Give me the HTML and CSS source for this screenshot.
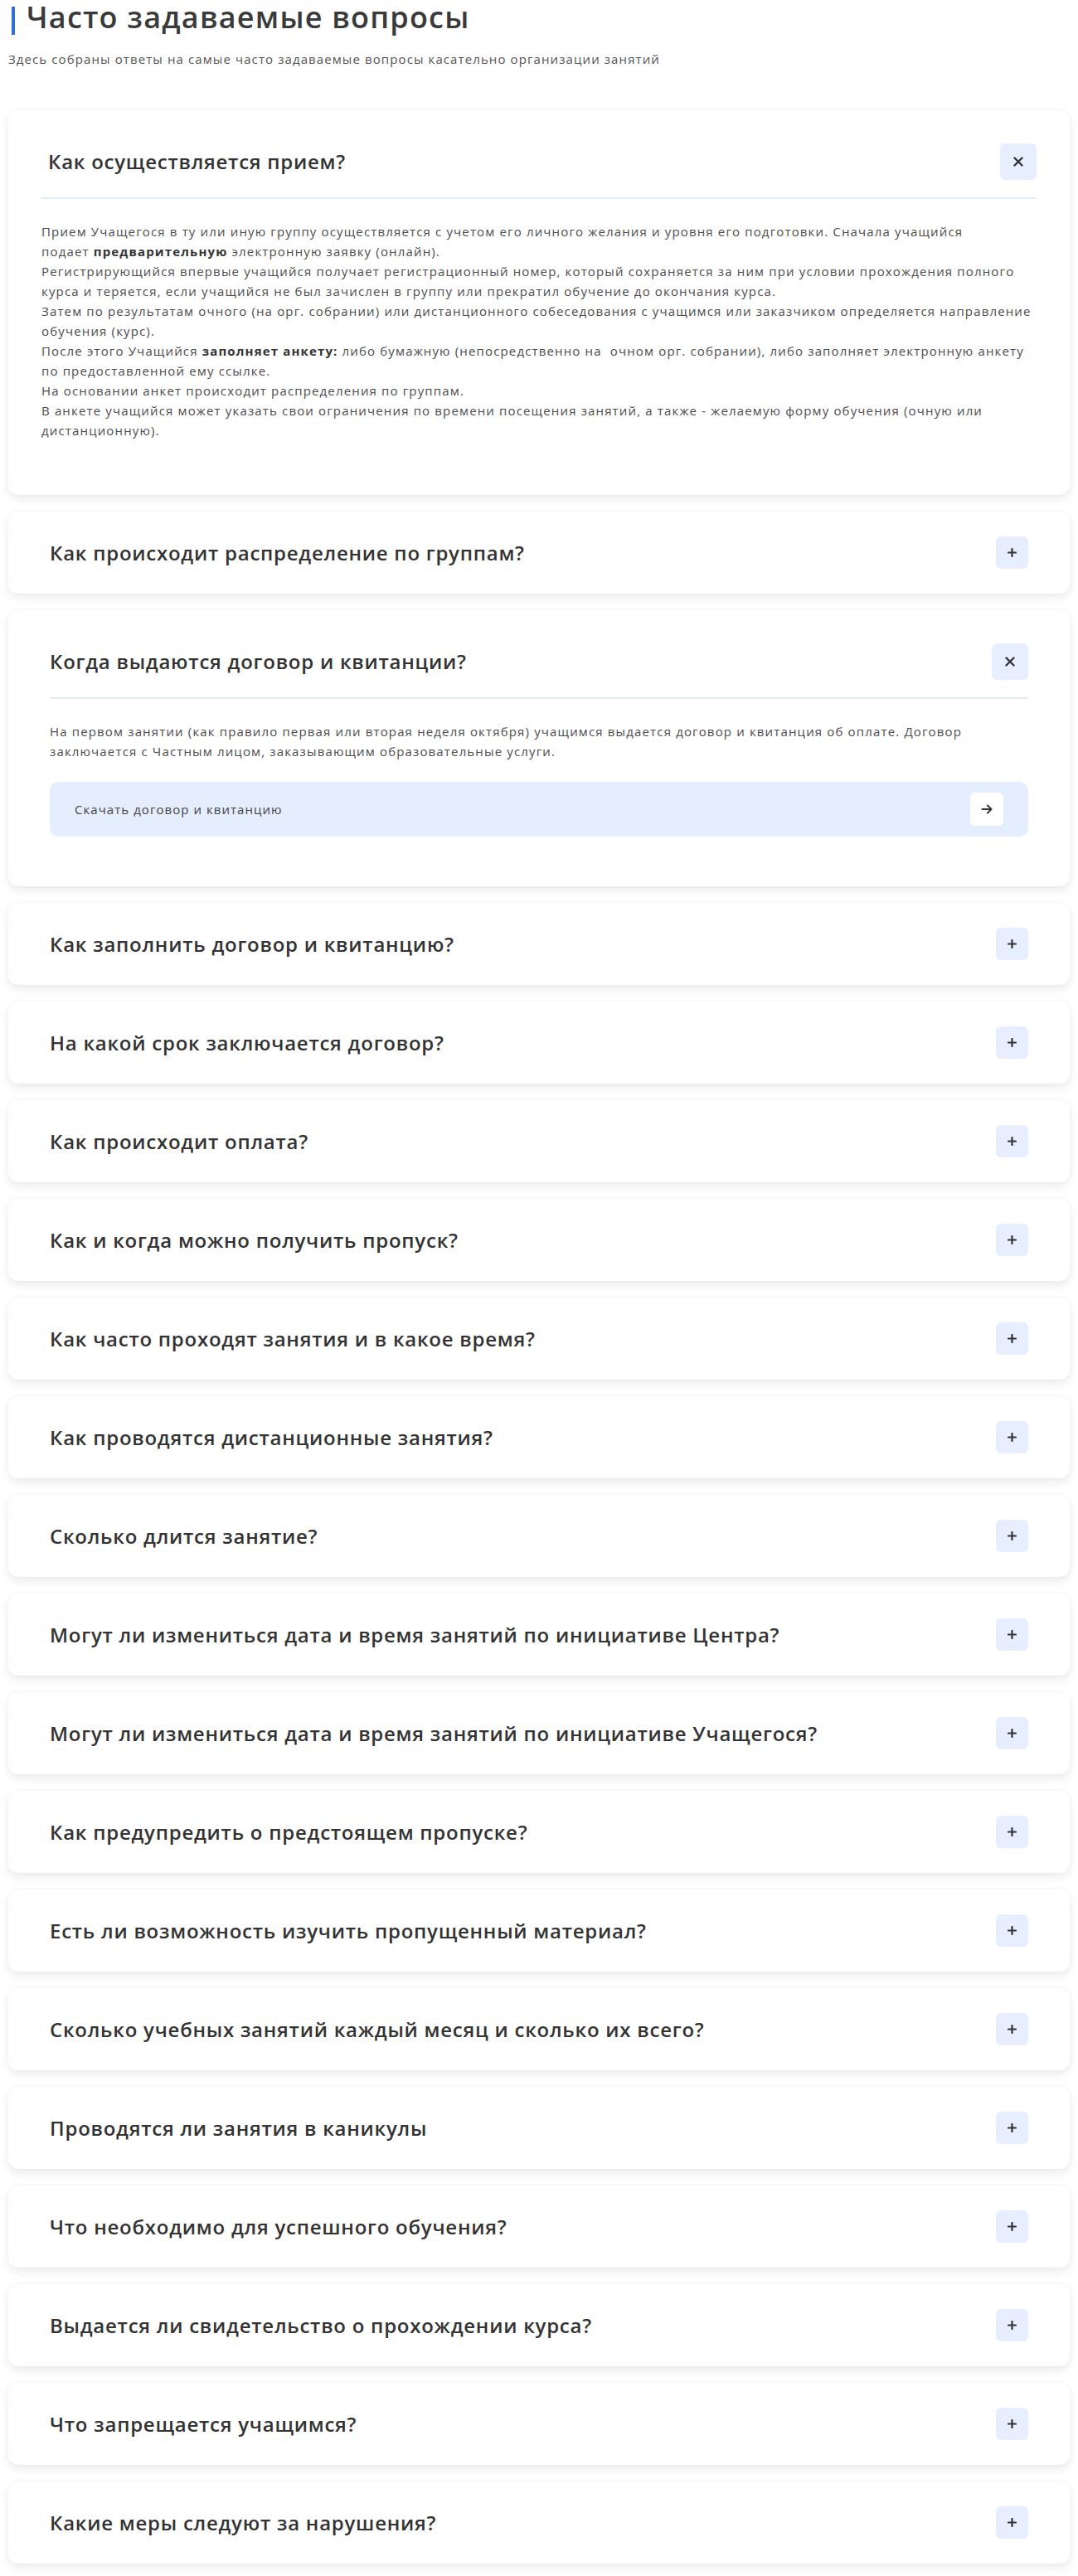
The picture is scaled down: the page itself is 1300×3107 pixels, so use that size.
FILE: index.html
```html
<!DOCTYPE html>
<html lang="ru">
<head>
<meta charset="utf-8">
<title>Часто задаваемые вопросы</title>
<link rel="stylesheet" href="styles.css">
</head>
<body>
<h1 class="title">Часто задаваемые вопросы</h1>
<p class="subtitle">Здесь собраны ответы на самые часто задаваемые вопросы касательно организации занятий</p>

<div class="faq">
  <div class="card open first">
    <div class="head">
      <h3 class="q">Как осуществляется прием?</h3>
      <span class="toggle"><svg width="12" height="12" viewBox="0 0 12 12"><path d="M1.5 1.5L10.5 10.5M10.5 1.5L1.5 10.5" stroke="#333" stroke-width="2.4" stroke-linecap="round"/></svg></span>
    </div>
    <div class="answer">
      <p>Прием Учащегося в ту или иную группу осуществляется с учетом его личного желания и уровня его подготовки. Сначала учащийся<br>подает <b>предварительную</b> электронную заявку (онлайн).<br>Регистрирующийся впервые учащийся получает регистрационный номер, который сохраняется за ним при условии прохождения полного<br>курса и теряется, если учащийся не был зачислен в группу или прекратил обучение до окончания курса.<br>Затем по результатам очного (на орг. собрании) или дистанционного собеседования с учащимся или заказчиком определяется направление<br>обучения (курс).<br>После этого Учащийся <b>заполняет анкету:</b> либо бумажную (непосредственно на&nbsp; очном орг. собрании), либо заполняет электронную анкету<br>по предоставленной ему ссылке.<br>На основании анкет происходит распределения по группам.<br>В анкете учащийся может указать свои ограничения по времени посещения занятий, а также - желаемую форму обучения (очную или<br>дистанционную).</p>
    </div>
  </div>

  <div class="card">
    <div class="head">
      <h3 class="q">Как происходит распределение по группам?</h3>
      <span class="toggle"><svg width="11" height="11" viewBox="0 0 11 11"><path d="M5.5 1V10M1 5.5H10" stroke="#333" stroke-width="2.2" stroke-linecap="round"/></svg></span>
    </div>
  </div>

  <div class="card open">
    <div class="head">
      <h3 class="q">Когда выдаются договор и квитанции?</h3>
      <span class="toggle"><svg width="12" height="12" viewBox="0 0 12 12"><path d="M1.5 1.5L10.5 10.5M10.5 1.5L1.5 10.5" stroke="#333" stroke-width="2.4" stroke-linecap="round"/></svg></span>
    </div>
    <div class="answer">
      <p>На первом занятии (как правило первая или вторая неделя октября) учащимся выдается договор и квитанция об оплате. Договор<br>заключается с Частным лицом, заказывающим образовательные услуги.</p>
      <div class="download">
        <span>Скачать договор и квитанцию</span>
        <span class="arrow"><svg width="14" height="14" viewBox="0 0 14 14"><path d="M1.5 7H12.5M8 2.5L12.5 7L8 11.5" fill="none" stroke="#333" stroke-width="2" stroke-linecap="round" stroke-linejoin="round"/></svg></span>
      </div>
    </div>
  </div>

  <div class="card"><div class="head"><h3 class="q">Как заполнить договор и квитанцию?</h3><span class="toggle"><svg width="11" height="11" viewBox="0 0 11 11"><path d="M5.5 1V10M1 5.5H10" stroke="#333" stroke-width="2.2" stroke-linecap="round"/></svg></span></div></div>
  <div class="card"><div class="head"><h3 class="q">На какой срок заключается договор?</h3><span class="toggle"><svg width="11" height="11" viewBox="0 0 11 11"><path d="M5.5 1V10M1 5.5H10" stroke="#333" stroke-width="2.2" stroke-linecap="round"/></svg></span></div></div>
  <div class="card"><div class="head"><h3 class="q">Как происходит оплата?</h3><span class="toggle"><svg width="11" height="11" viewBox="0 0 11 11"><path d="M5.5 1V10M1 5.5H10" stroke="#333" stroke-width="2.2" stroke-linecap="round"/></svg></span></div></div>
  <div class="card"><div class="head"><h3 class="q">Как и когда можно получить пропуск?</h3><span class="toggle"><svg width="11" height="11" viewBox="0 0 11 11"><path d="M5.5 1V10M1 5.5H10" stroke="#333" stroke-width="2.2" stroke-linecap="round"/></svg></span></div></div>
  <div class="card"><div class="head"><h3 class="q">Как часто проходят занятия и в какое время?</h3><span class="toggle"><svg width="11" height="11" viewBox="0 0 11 11"><path d="M5.5 1V10M1 5.5H10" stroke="#333" stroke-width="2.2" stroke-linecap="round"/></svg></span></div></div>
  <div class="card"><div class="head"><h3 class="q">Как проводятся дистанционные занятия?</h3><span class="toggle"><svg width="11" height="11" viewBox="0 0 11 11"><path d="M5.5 1V10M1 5.5H10" stroke="#333" stroke-width="2.2" stroke-linecap="round"/></svg></span></div></div>
  <div class="card"><div class="head"><h3 class="q">Сколько длится занятие?</h3><span class="toggle"><svg width="11" height="11" viewBox="0 0 11 11"><path d="M5.5 1V10M1 5.5H10" stroke="#333" stroke-width="2.2" stroke-linecap="round"/></svg></span></div></div>
  <div class="card"><div class="head"><h3 class="q">Могут ли измениться дата и время занятий по инициативе Центра?</h3><span class="toggle"><svg width="11" height="11" viewBox="0 0 11 11"><path d="M5.5 1V10M1 5.5H10" stroke="#333" stroke-width="2.2" stroke-linecap="round"/></svg></span></div></div>
  <div class="card"><div class="head"><h3 class="q">Могут ли измениться дата и время занятий по инициативе Учащегося?</h3><span class="toggle"><svg width="11" height="11" viewBox="0 0 11 11"><path d="M5.5 1V10M1 5.5H10" stroke="#333" stroke-width="2.2" stroke-linecap="round"/></svg></span></div></div>
  <div class="card"><div class="head"><h3 class="q">Как предупредить о предстоящем пропуске?</h3><span class="toggle"><svg width="11" height="11" viewBox="0 0 11 11"><path d="M5.5 1V10M1 5.5H10" stroke="#333" stroke-width="2.2" stroke-linecap="round"/></svg></span></div></div>
  <div class="card"><div class="head"><h3 class="q">Есть ли возможность изучить пропущенный материал?</h3><span class="toggle"><svg width="11" height="11" viewBox="0 0 11 11"><path d="M5.5 1V10M1 5.5H10" stroke="#333" stroke-width="2.2" stroke-linecap="round"/></svg></span></div></div>
  <div class="card"><div class="head"><h3 class="q">Сколько учебных занятий каждый месяц и сколько их всего?</h3><span class="toggle"><svg width="11" height="11" viewBox="0 0 11 11"><path d="M5.5 1V10M1 5.5H10" stroke="#333" stroke-width="2.2" stroke-linecap="round"/></svg></span></div></div>
  <div class="card"><div class="head"><h3 class="q">Проводятся ли занятия в каникулы</h3><span class="toggle"><svg width="11" height="11" viewBox="0 0 11 11"><path d="M5.5 1V10M1 5.5H10" stroke="#333" stroke-width="2.2" stroke-linecap="round"/></svg></span></div></div>
  <div class="card"><div class="head"><h3 class="q">Что необходимо для успешного обучения?</h3><span class="toggle"><svg width="11" height="11" viewBox="0 0 11 11"><path d="M5.5 1V10M1 5.5H10" stroke="#333" stroke-width="2.2" stroke-linecap="round"/></svg></span></div></div>
  <div class="card"><div class="head"><h3 class="q">Выдается ли свидетельство о прохождении курса?</h3><span class="toggle"><svg width="11" height="11" viewBox="0 0 11 11"><path d="M5.5 1V10M1 5.5H10" stroke="#333" stroke-width="2.2" stroke-linecap="round"/></svg></span></div></div>
  <div class="card"><div class="head"><h3 class="q">Что запрещается учащимся?</h3><span class="toggle"><svg width="11" height="11" viewBox="0 0 11 11"><path d="M5.5 1V10M1 5.5H10" stroke="#333" stroke-width="2.2" stroke-linecap="round"/></svg></span></div></div>
  <div class="card"><div class="head"><h3 class="q">Какие меры следуют за нарушения?</h3><span class="toggle"><svg width="11" height="11" viewBox="0 0 11 11"><path d="M5.5 1V10M1 5.5H10" stroke="#333" stroke-width="2.2" stroke-linecap="round"/></svg></span></div></div>
</div>
</body>
</html>
```

FILE: styles.css
```css
html, body {
  background: #fff;
}

body {
  margin: 0;
  padding: 0 10px 15px;
  font-family: "Open Sans", "Noto Sans", sans-serif;
  color: #333;
}

.title {
  display: flex;
  margin: 0 0 0 4px;
  font-size: 36px;
  font-weight: 600;
  line-height: 42px;
  letter-spacing: 1.2px;
  color: #3a3a3a;
}

.title::before {
  content: "";
  flex: none;
  width: 4px;
  height: 34px;
  align-self: flex-end;
  margin-right: 14px;
  background: #2f6fd6;
}

.subtitle {
  margin: 19px 0 0;
  font-size: 15px;
  line-height: 20px;
  letter-spacing: 1.1px;
  color: #555;
}

.faq {
  display: flex;
  flex-direction: column;
  gap: 20px;
  margin-top: 52px;
}

.card {
  background: #fff;
  border-radius: 12px;
  padding: 30px 50px;
  box-shadow: 0 5px 12px rgba(0, 0, 0, 0.08), 0 0 5px rgba(0, 0, 0, 0.03);
}

.card.open {
  padding: 40px 50px;
}

.card.first {
  padding: 40px;
}

.head {
  display: flex;
  align-items: center;
  justify-content: space-between;
}

.open .head {
  padding-bottom: 21px;
  border-bottom: 2px solid #e3ecfb;
}

.q {
  margin: 0;
  font-size: 24px;
  font-weight: 600;
  line-height: 30px;
  letter-spacing: 0.75px;
  color: #333;
}

.first .q {
  padding-left: 8px;
}

.toggle {
  flex: none;
  width: 39px;
  height: 39px;
  border-radius: 6px;
  background: #e6eeff;
  display: flex;
  align-items: center;
  justify-content: center;
}

.open .toggle {
  width: 44px;
  height: 44px;
}

.answer {
  padding: 27px 0 20px;
  font-size: 15px;
  line-height: 24px;
  letter-spacing: 1.15px;
  color: #4d4d4d;
}

.first .answer {
  padding-bottom: 26px;
}

.answer p {
  margin: 0;
  white-space: nowrap;
}

.answer b {
  font-weight: 700;
  color: #333;
}

.download {
  margin-top: 25px;
  display: flex;
  align-items: center;
  justify-content: space-between;
  padding: 13px 30px;
  border-radius: 10px;
  background: #e5eefe;
  font-size: 15px;
  letter-spacing: 1.05px;
  color: #444;
}

.arrow {
  width: 40px;
  height: 40px;
  border-radius: 6px;
  background: #fff;
  display: flex;
  align-items: center;
  justify-content: center;
}
```
